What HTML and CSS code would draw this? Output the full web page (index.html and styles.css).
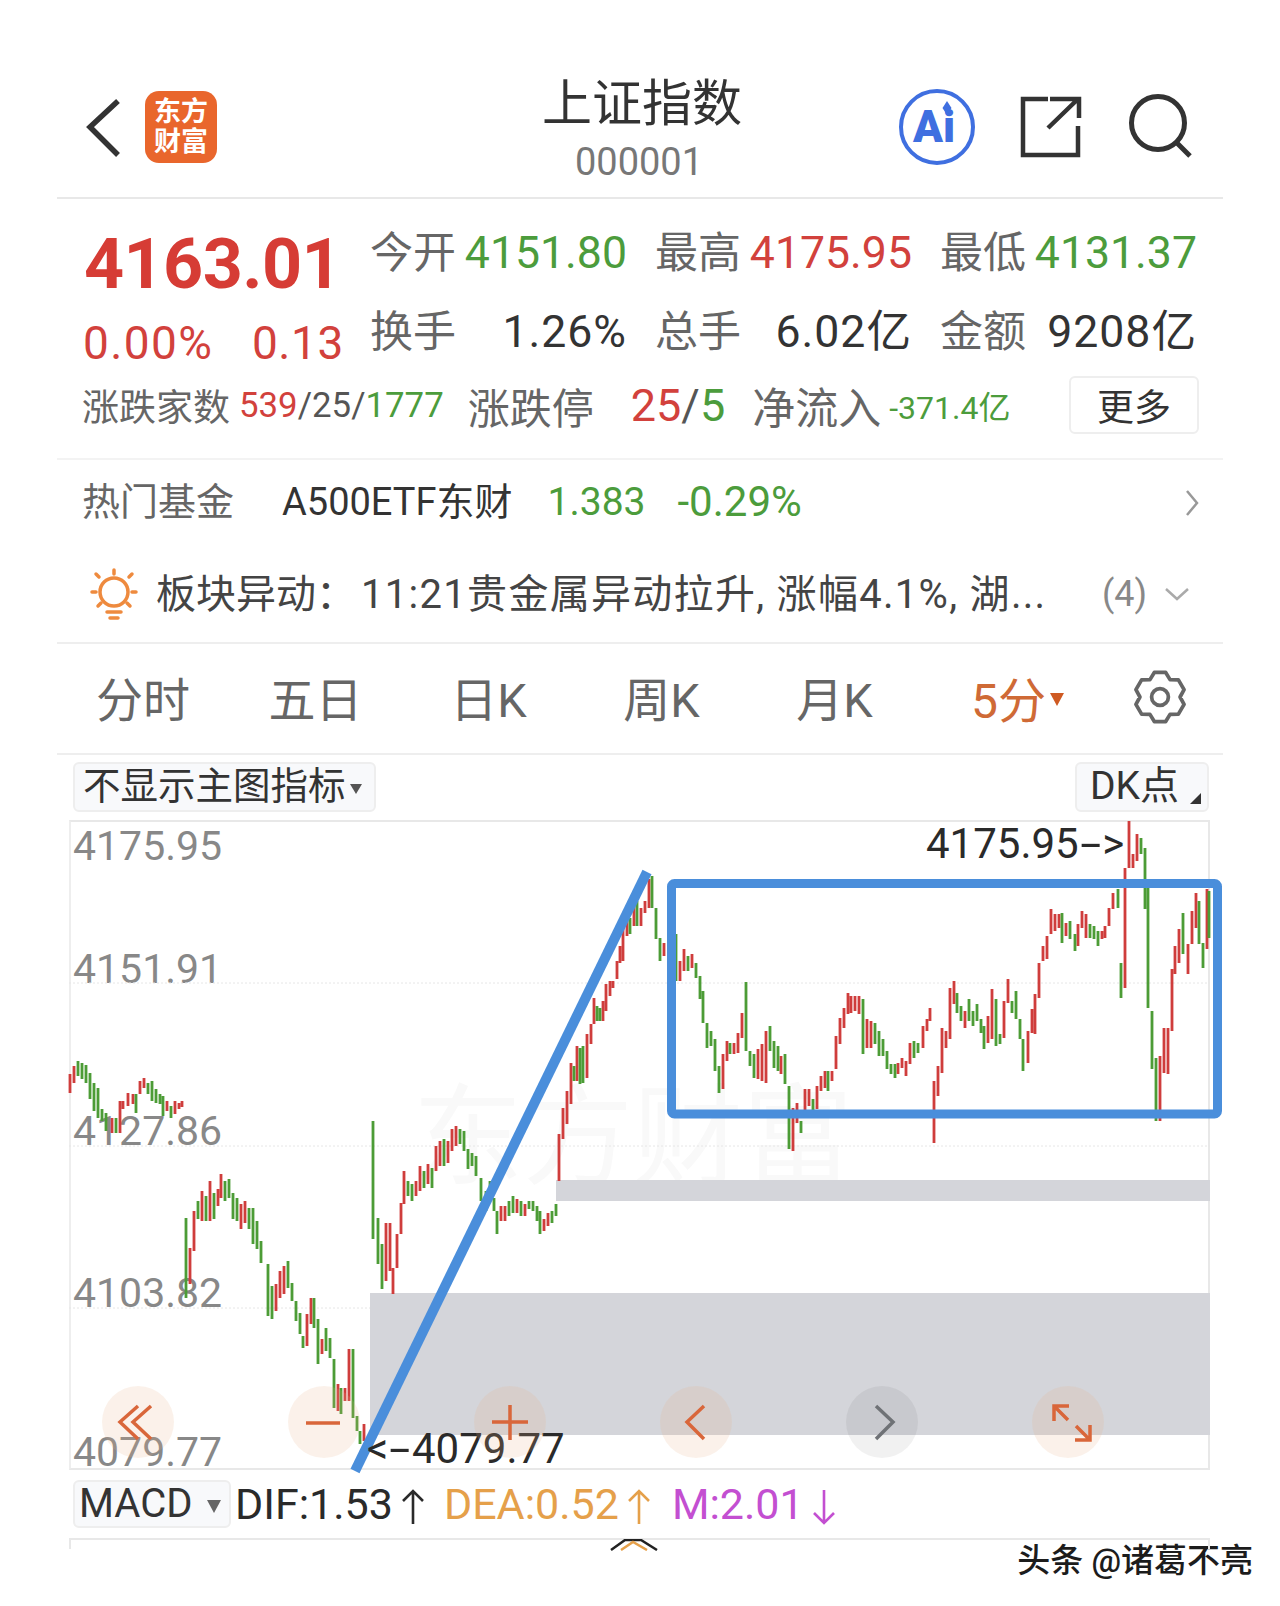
FILE: index.html
```html
<!DOCTYPE html>
<html lang="zh-CN">

<head>
    <meta charset="UTF-8">
    <meta name="viewport" content="width=device-width">

    <title>上证指数</title>

    <link rel="stylesheet" href="styles.css">

</head>

<body>
    <div class="page">
        <header class="top">
            <svg class="back" viewBox="0 0 40 62" width="40" height="62"><path d="M34 4 L6 30 L34 58" /></svg>
            <div class="logo"><span>东方</span><span>财富</span></div>
            <div class="title">
                <h1>上证指数</h1>
                <p>000001</p>
            </div>
            <svg class="ai" viewBox="0 0 80 80" width="80" height="80">
                <circle cx="40" cy="40" r="36" />
                <text x="37" y="55">Ai</text>
                <path class="spark" d="M50 14 L54.5 21 L50 28 L45.5 21 Z" />
            </svg>
            <svg class="share" viewBox="1020 96 62 62" width="62" height="62">
                <path d="M1048 99 H1023 V155 H1078 V126" />
                <path d="M1048 128 L1078 99 M1050 99 H1079 V118" />
            </svg>
            <svg class="search" viewBox="1127 94 66 66" width="66" height="66">
                <circle cx="1157" cy="123" r="26.5" />
                <path d="M1176 143 L1189 156" />
            </svg>
        </header>

        <section class="quote">
            <div class="quote-top">
                <div class="price">
                    <div class="price-now">4163.01</div>
                    <div class="price-chg"><span class="chg-pct">0.00%</span><span>0.13</span></div>
                </div>
                <div class="stats">
                    <div class="stat"><span class="label">今开</span><span class="up-green">4151.80</span></div>
                    <div class="stat"><span class="label">最高</span><span class="up-red">4175.95</span></div>
                    <div class="stat"><span class="label">最低</span><span class="up-green">4131.37</span></div>
                    <div class="stat"><span class="label">换手</span><span class="dark">1.26%</span></div>
                    <div class="stat"><span class="label">总手</span><span class="dark">6.02亿</span></div>
                    <div class="stat"><span class="label">金额</span><span class="dark">9208亿</span></div>
                </div>
            </div>
            <div class="breadth">
                <span class="b-label">涨跌家数</span>
                <span class="b-count"><i class="up-red">539</i>/25/<i class="up-green">1777</i></span>
                <span class="b-head">涨跌停</span>
                <span class="b-limit"><i class="up-red">25</i>/<i class="up-green">5</i></span>
                <span class="b-flow">净流入</span>
                <span class="b-net up-green">-371.4亿</span>
                <button class="more">更多</button>
            </div>
        </section>

        <section class="fund">
            <span class="fund-label">热门基金</span>
            <span class="fund-name">A500ETF东财</span>
            <span class="fund-price up-green">1.383</span>
            <span class="fund-pct up-green">-0.29%</span>
            <svg class="fund-arrow" viewBox="0 0 14 28" width="14" height="28"><path d="M2 2 L12 14 L2 26" /></svg>
        </section>

        <section class="alert">
            <svg class="sun" viewBox="90 568 52 54" width="52" height="54">
                <circle cx="114" cy="592" r="14" />
                <path d="M114 570 V574 M96 574 L99 577 M132 574 L129 577 M92 592 H96 M132 592 H136 M98 606 L101 603 M130 606 L127 603" />
                <path d="M107 612 H121 M110 618 H118" />
            </svg>
            <span class="alert-text">板块异动：<span class="alert-body">11:21贵金属异动拉升, 涨幅4.1%, 湖...</span></span>
            <span class="alert-count">(4)</span>
            <svg class="alert-arrow" viewBox="0 0 26 14" width="26" height="14"><path d="M2 2 L13 12 L24 2" /></svg>
        </section>

        <nav class="tabs">
            <span>分时</span>
            <span>五日</span>
            <span>日K</span>
            <span>周K</span>
            <span>月K</span>
            <span class="tab-on">5分<i class="caret caret-on"></i></span>
            <svg class="gear" viewBox="0 0 60 60" width="56" height="56">
                <polygon points="36.1,3.7 40.75,11.4 49.7,11.6 55.8,22.1 51.5,30 55.8,37.9 49.7,48.4 40.75,48.6 36.1,56.3 23.9,56.3 19.25,48.6 10.3,48.4 4.2,37.9 8.5,30 4.2,22.1 10.3,11.6 19.25,11.4 23.9,3.7" />
                <circle cx="30" cy="30" r="9" />
            </svg>
        </nav>

        <div class="toolbar">
            <div class="pick pick-main">不显示主图指标<i class="caret"></i></div>
            <div class="pick pick-dk">DK点<i class="corner"></i></div>
        </div>

        <div class="chart">
            <div class="mark">东方财富</div>
            <span class="axis a1">4175.95</span>
            <span class="axis a2">4151.91</span>
            <span class="axis a3">4127.86</span>
            <span class="axis a4">4103.82</span>
            <span class="axis a5">4079.77</span>

            <svg class="plot" viewBox="69 819 1141 650" width="1141" height="650">
                <path class="grid" d="M69 982 H1210 M69 1145 H1210 M69 1307 H1210" />
                <rect class="zone" x="556" y="1179" width="654" height="21" />
                <rect class="zone" x="370" y="1292" width="840" height="142" />
                <!-- red bars -->
                <path class="bar-red" d="M70 1073V1092M74 1065V1082M112 1117V1132M120 1100V1132M123 1100V1108M128 1092V1105M133 1093V1103M140 1080V1093M144 1077V1087M167 1100V1110M175 1100V1113M179 1102V1108M182 1100V1106
M190 1247V1283M194 1210V1250M202 1190V1220M210 1180V1220M218 1188V1205M221 1173V1197M241 1203V1228M245 1200V1222M276 1283V1310M280 1270V1297M284 1265V1293M307 1313V1345M311 1297V1323M322 1338V1353M338 1383V1410M345 1387V1400M349 1348V1400M364 1423V1440
M386 1222V1280M390 1222V1270M393 1267V1293M397 1233V1267M401 1202V1233M404 1170V1203M416 1180V1195M420 1165V1190M428 1163V1183M436 1145V1170M440 1140V1165M448 1140V1162M452 1128V1150M456 1125V1145M501 1205V1220M505 1205V1220M517 1198V1212M525 1203V1215M544 1218V1230M548 1212V1225
M559 1133V1180M563 1107V1138M567 1090V1123M571 1062V1103M577 1045V1080M587 1033V1077M591 1023V1043M594 997V1023M603 1000V1020M606 983V1010M610 980V995M613 980V987M617 960V978M620 945V962M623 927V960M627 920V935M634 905V925M641 907V925M645 900V912M649 878V907M664 942V955
M680 960V980M684 948V970M692 953V967M723 1053V1088M727 1040V1060M734 1042V1053M738 1032V1052M742 1012V1037M758 1048V1078M762 1043V1080M766 1030V1082M781 1055V1073M793 1107V1150M797 1102V1122M805 1088V1110M809 1088V1105M817 1085V1108M821 1075V1090M825 1070V1087M832 1070V1080M836 1035V1068M840 1017V1043M844 1007V1027M848 992V1013M851 995V1012M855 995V1010M859 995V1013M867 1018V1047M871 1020V1047M898 1062V1073M902 1057V1067M906 1060V1075M910 1042V1063M923 1025V1047M927 1018V1030M930 1007V1020
M934 1080V1142M938 1065V1095M942 1027V1072M946 1030V1047M950 987V1038M954 980V1003M965 1010V1027M988 1015V1042M992 988V1038M1004 1000V1037M1008 978V1002M1028 1030V1062M1032 1008V1032M1035 993V1033M1039 962V997M1043 945V960M1047 935V958M1051 908V933M1055 913V930M1059 913V927M1066 922V935M1078 923V945M1082 910V927M1086 913V937M1102 930V938M1105 925V937M1109 907V925M1113 892V908M1125 867V987M1129 820V867M1133 853V867M1137 833V860M1160 1055V1120M1164 1027V1072M1168 1027V1073M1172 968V1030M1175 945V973M1179 928V962M1188 943V973M1192 910V943M1196 892V927M1207 888V948" />
                <!-- green bars -->
                <path class="bar-green" d="M78 1060V1075M82 1062V1078M86 1064V1082M90 1072V1098M94 1082V1110M98 1087V1117M102 1108V1120M106 1112V1130M116 1117V1132M136 1093V1112M148 1082V1093M152 1080V1100M156 1088V1102M160 1093V1103M163 1095V1115M171 1105V1117
M186 1217V1297M198 1200V1218M206 1195V1220M214 1192V1218M225 1180V1200M229 1178V1197M233 1192V1218M237 1197V1220M249 1207V1228M253 1207V1243M257 1220V1248M261 1240V1262M268 1263V1315M272 1285V1318M288 1260V1287M292 1282V1300M296 1300V1320M300 1312V1333M303 1335V1347M314 1297V1327M318 1318V1363M326 1327V1350M330 1337V1357M334 1358V1407M341 1387V1413M353 1348V1417M357 1415V1430M360 1430V1443
M373 1120V1238M378 1217V1263M382 1243V1288M408 1180V1195M412 1183V1200M424 1170V1187M432 1167V1187M444 1138V1165M460 1128V1143M464 1130V1150M468 1148V1168M472 1152V1165M476 1155V1175M481 1177V1200M486 1190V1210M490 1180V1200M494 1197V1210M497 1210V1233M509 1200V1215M513 1195V1212M521 1200V1215M529 1200V1208M533 1200V1210M537 1205V1220M540 1210V1233M552 1210V1222M556 1203V1215
M574 1065V1080M580 1047V1083M583 1045V1082M597 1005V1020M600 1007V1020M630 917V933M637 900V925M652 875V907M656 907V938M660 937V960
M676 933V980M688 955V970M696 962V977M700 975V998M703 990V1022M707 1022V1047M711 1030V1045M715 1038V1070M719 1065V1092M730 1042V1053M746 981V1050M750 1050V1065M754 1053V1077M770 1025V1050M774 1040V1067M778 1045V1070M785 1053V1083M789 1085V1148M801 1120V1132M813 1098V1110M828 1070V1090M863 998V1053M875 1022V1043M879 1030V1055M883 1038V1055M887 1050V1068M891 1063V1073M895 1063V1077M914 1040V1057M918 1042V1052
M957 992V1012M961 1005V1020M969 998V1020M973 1010V1025M977 1003V1020M981 1018V1032M984 1025V1048M996 998V1045M1000 1033V1043M1012 1000V1012M1016 990V1018M1020 1018V1038M1023 1038V1070M1062 912V942M1070 920V938M1075 933V950M1090 923V937M1094 925V938M1098 930V945M1118 888V907M1121 962V997M1141 837V853M1145 847V908M1148 887V1007M1152 1010V1068M1156 1057V1120M1183 912V953M1199 900V943M1203 942V967M1209 890V937" />
                <rect class="box" x="671.5" y="882.5" width="546" height="230.5" rx="3" />
                <path class="trend" d="M355 1470 L647 871" />
            </svg>

            <span class="note n-high">4175.95<i class="dash">-</i>&gt;</span>
            <span class="note n-low">&lt;<i class="dash">-</i>4079.77</span>

            <div class="chart-nav">
                <div class="nav-btn">
                    <svg viewBox="0 0 72 72" width="72" height="72"><path d="M36 20 L18 36 L36 53 M49 20 L31 36 L49 53" /></svg>
                </div>
                <div class="nav-btn">
                    <svg viewBox="0 0 72 72" width="72" height="72"><path d="M18 37 H52" /></svg>
                </div>
                <div class="nav-btn">
                    <svg viewBox="0 0 72 72" width="72" height="72"><path d="M18 36 H54 M36 19 V54" /></svg>
                </div>
                <div class="nav-btn">
                    <svg viewBox="0 0 72 72" width="72" height="72"><path d="M44 20 L27 36 L44 53" /></svg>
                </div>
                <div class="nav-btn nav-gray">
                    <svg viewBox="0 0 72 72" width="72" height="72"><path d="M30 20 L47 36 L30 53" /></svg>
                </div>
                <div class="nav-btn">
                    <svg viewBox="0 0 72 72" width="72" height="72"><path d="M22 35 V20 H37 M22 20 L36 34 M58 39 V54 H43 M58 54 L44 40" /></svg>
                </div>
            </div>
        </div>

        <div class="macd">
            <div class="pick pick-macd">MACD<i class="caret caret-big"></i></div>
            <span class="m-dif">DIF:1.53<svg viewBox="0 0 24 38" width="24" height="38"><path d="M12 36 V3 M2 13 L12 3 L22 13" /></svg></span>
            <span class="m-dea">DEA:0.52<svg viewBox="0 0 24 38" width="24" height="38"><path d="M12 36 V3 M2 13 L12 3 L22 13" /></svg></span>
            <span class="m-m">M:2.01<svg viewBox="0 0 24 38" width="24" height="38"><path d="M12 2 V35 M2 25 L12 35 L22 25" /></svg></span>
        </div>

        <div class="subchart">
            <svg class="sub-curve" viewBox="0 0 52 12" width="52" height="12">
                <path class="c-black" d="M4 11 L18 1 H34 L50 11" />
                <path class="c-orange" d="M14 11 L26 3 L40 11" />
            </svg>
        </div>

        <footer class="credit">头条 @诸葛不亮</footer>
    </div>
</body>

</html>
```

FILE: styles.css
```css
* {
    box-sizing: border-box;
}

body {
    margin: 0;
    background-color: #fff;
    color: #333;
    font-family: Roboto, "Noto Sans CJK SC", sans-serif;
}

i {
    font-style: normal;
}

svg {
    display: block;
    fill: none;
}

.page {
    width: 1280px;
    height: 1606px;
    overflow: hidden;
    padding: 0 57px;
}

.up-red {
    color: #d2413c;
}

.up-green {
    color: #4c9c3c;
}

.dark {
    color: #333;
    letter-spacing: 1px;
}

.label {
    color: #666;
}

/* header */
.top {
    position: relative;
    height: 199px;
    padding-top: 91px;
    display: flex;
    align-items: flex-start;
    border-bottom: 2px solid #e8e8e8;
}

.back {
    margin: 6px 0 0 27px;
    stroke: #333;
    stroke-width: 5.5;
}

.logo {
    width: 72px;
    height: 72px;
    margin-left: 21px;
    border-radius: 14px;
    background-color: #e9662c;
    color: #fff;
    font-size: 27px;
    font-weight: 700;
    line-height: 30px;
    display: flex;
    flex-direction: column;
    align-items: center;
    justify-content: center;
}

.title {
    width: 200px;
    margin: -18px -2px 0 325px;
    text-align: center;
    white-space: nowrap;
}

.title h1 {
    margin: 0;
    font-size: 50px;
    font-weight: 400;
    line-height: 62px;
}

.title p {
    margin: 5px 0 0 -6px;
    color: #777;
    font-size: 38px;
    line-height: 44px;
}

.ai {
    margin: -4px 0 0 157px;
    stroke: #3f6fe0;
    stroke-width: 4;
}

.ai text {
    fill: #3f6fe0;
    stroke: none;
    font-size: 44px;
    font-weight: 900;
    text-anchor: middle;
}

.ai .spark {
    fill: #3f6fe0;
    stroke: none;
}

.share {
    margin: 5px 0 0 43px;
    stroke: #333;
    stroke-width: 4.5;
}

.search {
    margin: 3px 0 0 46px;
    stroke: #333;
    stroke-width: 5;
}

/* quote block */
.quote {
    height: 261px;
    padding: 14px 26px 0 27px;
    border-bottom: 2px solid #f3f3f3;
}

.quote-top {
    display: flex;
}

.price {
    width: 286px;
    flex: none;
}

.price-now {
    height: 80px;
    padding-top: 11px;
    color: #d63c35;
    font-size: 70px;
    font-weight: 700;
    line-height: 80px;
    letter-spacing: -0.6px;
}

.price-chg {
    height: 76px;
    width: 260px;
    padding-top: 8px;
    color: #d2413c;
    font-size: 46px;
    line-height: 84px;
    letter-spacing: 0.6px;
    display: flex;
    justify-content: space-between;
}

.chg-pct {
    margin-left: -1px;
    letter-spacing: 1.4px;
}

.stats {
    display: grid;
    grid-template-columns: repeat(3, 257px);
    column-gap: 28px;
    grid-auto-rows: 79px;
    font-size: 43px;
    white-space: nowrap;
}

.stat {
    display: flex;
    justify-content: space-between;
    align-items: center;
    line-height: 60px;
}

.stat span:last-child {
    font-size: 44.6px;
}

.breadth {
    height: 60px;
    margin: 4px -2px 0 0;
    display: flex;
    align-items: center;
    white-space: nowrap;
    color: #555;
}

.b-label {
    margin-left: -2px;
    font-size: 37px;
    color: #666;
}

.b-count {
    margin-left: 9px;
    font-size: 34.8px;
}

.b-head {
    margin-left: 24px;
    font-size: 42px;
    color: #666;
}

.b-limit {
    margin-left: 37px;
    font-size: 45px;
}

.b-flow {
    margin-left: 27px;
    font-size: 43px;
    color: #666;
}

.b-net {
    margin-left: 8px;
    font-size: 32px;
}

.more {
    margin-left: auto;
    width: 130px;
    height: 58px;
    padding: 0;
    border: 2px solid #eee;
    border-radius: 6px;
    background-color: #fff;
    color: #333;
    font-family: inherit;
    font-size: 37px;
}

/* fund + alert */
.fund {
    height: 80px;
    padding: 4px 24px 0 25px;
    display: flex;
    align-items: center;
    white-space: nowrap;
    font-size: 38px;
    line-height: 50px;
}

.fund-label {
    color: #666;
}

.fund-name {
    margin-left: 48px;
    color: #333;
}

.fund-price {
    margin-left: 35px;
    font-size: 39px;
}

.fund-pct {
    margin-left: 32px;
    font-size: 42px;
}

.fund-arrow {
    margin: 2px 0 0 auto;
    stroke: #999;
    stroke-width: 2.5;
}

.alert {
    height: 104px;
    padding: 0 33px;
    display: flex;
    align-items: center;
    white-space: nowrap;
    font-size: 38px;
    border-bottom: 2px solid #eee;
}

.sun {
    margin: 8px 14px 0 0;
    flex: none;
    stroke: #ee8a3e;
    stroke-width: 3.5;
    stroke-linecap: round;
}

.alert-text {
    color: #444;
    font-size: 40px;
}

.alert-body {
    margin-left: 5px;
    letter-spacing: 1.3px;
}

.alert-count {
    margin: 5px 0 0 auto;
    color: #888;
    font-size: 36px;
}

.alert-arrow {
    margin: 6px 0 0 17px;
    stroke: #aaa;
    stroke-width: 2.5;
}

/* period tabs */
.tabs {
    height: 111px;
    padding-bottom: 4px;
    display: grid;
    grid-template-columns: 172px repeat(5, 173px) 1fr;
    align-items: center;
    justify-items: center;
    color: #666;
    font-size: 47px;
    border-bottom: 2px solid #eee;
}

.tab-on {
    padding-left: 20px;
    color: #cf6a36;
    font-size: 48px;
    white-space: nowrap;
}

.caret {
    display: inline-block;
    width: 0;
    height: 0;
    margin-left: 4px;
    vertical-align: middle;
    border-style: solid;
    border-width: 10px 6px 0;
    border-color: #555 transparent transparent;
}

.caret-on {
    border-width: 13px 7px 0;
    border-color: #cf5a22 transparent transparent;
    vertical-align: 12px;
}

.gear {
    margin-left: 3px;
    stroke: #666;
    stroke-width: 4;
    stroke-linejoin: round;
}

/* indicator pickers */
.toolbar {
    height: 65px;
    padding: 7px 14px 0 16px;
    display: flex;
    justify-content: space-between;
    align-items: flex-start;
}

.pick {
    position: relative;
    height: 50px;
    border: 2px solid #eee;
    border-radius: 6px;
    background-color: #f8f9fb;
    color: #333;
    font-size: 37.5px;
    line-height: 44px;
    white-space: nowrap;
}

.pick-main {
    width: 303px;
    padding-left: 8px;
}

.pick-dk {
    width: 134px;
    padding-left: 13px;
    font-size: 39px;
}

.corner {
    position: absolute;
    right: 6px;
    bottom: 6px;
    width: 0;
    height: 0;
    border-style: solid;
    border-width: 0 0 11px 11px;
    border-color: transparent transparent #333;
}

/* chart */
.chart {
    position: relative;
    width: 1141px;
    height: 650px;
    margin-left: 12px;
    border: 2px solid #e8e8e8;
    border-left-color: #eee;
}

.plot {
    position: absolute;
    top: -2px;
    left: -2px;
    overflow: visible;
}

.mark {
    position: absolute;
    left: 342px;
    top: 257px;
    color: #f9f9f9;
    font-size: 110px;
    line-height: 120px;
    white-space: nowrap;
}

.axis {
    position: absolute;
    left: 2px;
    color: #888;
    font-size: 41px;
    line-height: 48px;
}

.a1 { top: 0; }
.a2 { top: 123px; }
.a3 { top: 285px; }
.a4 { top: 447px; }
.a5 { top: 606px; }

.grid {
    stroke: #e6e6e6;
    stroke-width: 1;
    stroke-dasharray: 2 2;
}

.zone {
    fill: #d4d5da;
}

.bar-red,
.bar-green {
    stroke-width: 2.8;
}

.bar-red {
    stroke: #cf3d3c;
}

.bar-green {
    stroke: #4c9c36;
}

.box {
    stroke: #4a8edb;
    stroke-width: 9;
}

.trend {
    stroke: #4a8edb;
    stroke-width: 10;
}

.note {
    position: absolute;
    color: #2a2a2a;
    font-size: 42px;
    line-height: 48px;
    white-space: nowrap;
}

.dash {
    display: inline-block;
    margin: 0 6px;
    transform: scaleX(1.8);
}

.n-high {
    left: 855px;
    top: -2px;
}

.n-low {
    left: 296px;
    top: 603px;
}

.chart-nav {
    position: absolute;
    left: 31px;
    top: 564px;
    display: flex;
    gap: 114px;
}

.nav-btn {
    width: 72px;
    height: 72px;
    border-radius: 50%;
    background-color: rgba(233, 177, 138, 0.18);
    stroke: #d9663a;
    stroke-width: 3.5;
}

.nav-gray {
    background-color: rgba(0, 0, 0, 0.055);
    stroke: #6f7276;
}

/* macd row */
.macd {
    height: 68px;
    padding-left: 16px;
    display: flex;
    align-items: center;
    font-size: 43px;
    white-space: nowrap;
}

.pick-macd {
    width: 158px;
    height: 48px;
    padding-left: 4px;
    font-size: 40px;
    background-color: #f8f9fb;
}

.caret-big {
    position: absolute;
    right: 8px;
    top: 18px;
    border-width: 13px 7px 0;
    border-color: #666 transparent transparent;
}

.macd svg {
    display: inline-block;
    margin-left: 8px;
    vertical-align: -7px;
    stroke-width: 2.6;
}

.m-dif {
    margin-left: 4px;
    color: #2a2a2a;
    stroke: #2a2a2a;
}

.m-dea {
    margin-left: 19px;
    color: #e5a04a;
    stroke: #e5a04a;
}

.m-m {
    margin-left: 21px;
    color: #c34fd1;
    stroke: #c34fd1;
}

.subchart {
    position: relative;
    width: 1141px;
    height: 11px;
    margin-left: 12px;
    border: 2px solid #e8e8e8;
    border-bottom: 0;
}

.sub-curve {
    position: absolute;
    left: 536px;
    top: -1px;
    stroke-width: 2.5;
}

.c-black {
    stroke: #222;
}

.c-orange {
    stroke: #e5a04a;
}

.credit {
    margin: -12px -30px 0 0;
    padding-top: 4px;
    text-align: right;
    color: #1c1c1c;
    font-size: 33px;
    font-weight: 500;
    line-height: 40px;
}
```
